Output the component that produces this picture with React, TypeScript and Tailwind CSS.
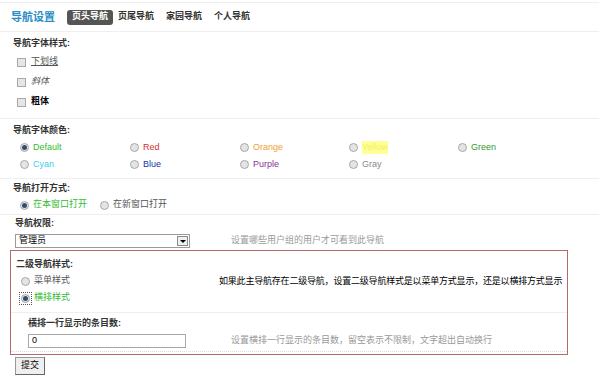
const FONT = "font-['Liberation_Sans','Noto_Sans_CJK_SC',sans-serif]";

const Radio = ({ checked = false, focus = false }: { checked?: boolean; focus?: boolean }) => (
  <span className={`flex items-center justify-center w-[11px] h-[11px] shrink-0 ${focus ? "outline outline-1 outline-dotted outline-[#555]" : ""}`}>
    <span className="flex items-center justify-center w-[9px] h-[9px] rounded-full border border-[#a8a8a8] bg-[#e4e4e4]">
      {checked && <span className="w-[5px] h-[5px] rounded-full bg-[#2f4f6f]" />}
    </span>
  </span>
);

const Checkbox = () => (
  <span className="w-[9px] h-[9px] shrink-0 border border-[#a8a8a8] bg-[#e6e6e6]" />
);

const Line = () => <div className="h-px bg-[#efefef]" />;

const colors = [
  { label: "Default", cls: "text-[#33bb33]", checked: true },
  { label: "Red", cls: "text-[#cc3333]" },
  { label: "Orange", cls: "text-[#eea035]" },
  { label: "Yellow", cls: "text-[#f2f25a] bg-[#ffff99]" },
  { label: "Green", cls: "text-[#339933]" },
  { label: "Cyan", cls: "text-[#44ccee]" },
  { label: "Blue", cls: "text-[#2233aa]" },
  { label: "Purple", cls: "text-[#883399]" },
  { label: "Gray", cls: "text-[#888888]" },
];

export default function App() {
  return (
    <div className={`w-[599px] h-[380px] bg-white text-[9px] text-[#333] overflow-hidden ${FONT}`}>
      <div className="h-[3px] border-b border-[#f0f0f0]" />

      {/* header */}
      <div className="h-[28px] flex items-center pl-[11px]">
        <span className="text-[11px] text-[#2b8ec6] font-bold mr-[12px]">导航设置</span>
        <span className="px-[5px] h-[15px] flex items-center rounded-[3px] bg-[#555] text-white font-bold text-[9px]">页头导航</span>
        <span className="ml-[5px] font-bold">页尾导航</span>
        <span className="ml-[12px] font-bold">家园导航</span>
        <span className="ml-[12px] font-bold">个人导航</span>
      </div>
      <Line />

      {/* font style */}
      <div className="pl-[13px]">
        <div className="h-[20px] flex items-end pb-[2px] font-bold">导航字体样式:</div>
        <div className="pl-[4px]">
          <div className="h-[20px] flex items-center gap-[5px]">
            <Checkbox />
            <span className="underline text-[#555]">下划线</span>
          </div>
          <div className="h-[20px] flex items-center gap-[5px]">
            <Checkbox />
            <span className="italic text-[#555]">斜体</span>
          </div>
          <div className="h-[20px] flex items-center gap-[5px]">
            <Checkbox />
            <span className="font-bold text-black">粗体</span>
          </div>
        </div>
      </div>
      <div className="h-[6px]" />
      <Line />

      {/* font color */}
      <div className="pl-[13px]">
        <div className="h-[19px] flex items-end pb-[1px] font-bold">导航字体颜色:</div>
        <div className="grid grid-cols-[110px_110px_109px_109px_109px] pl-[6px] pt-[1px]">
          {colors.map((c) => (
            <div key={c.label} className="h-[17px] flex items-center gap-[3px]">
              <Radio checked={c.checked} />
              <span className={c.cls}>{c.label}</span>
            </div>
          ))}
        </div>
      </div>
      <div className="h-[5px]" />
      <Line />

      {/* open mode */}
      <div className="pl-[13px]">
        <div className="h-[17px] flex items-end pb-[1px] font-bold">导航打开方式:</div>
        <div className="h-[18px] flex items-center pl-[6px] gap-[3px]">
          <Radio checked />
          <span className="text-[#33bb33] mr-[9px]">在本窗口打开</span>
          <Radio />
          <span className="text-[#555]">在新窗口打开</span>
        </div>
      </div>
      <Line />

      {/* permission */}
      <div className="pl-[15px]">
        <div className="h-[17px] flex items-center font-bold">导航权限:</div>
        <div className="h-[18px] flex items-center">
          <div className="w-[175px] h-[14px] border border-[#9a9a9a] flex items-center justify-between pl-[3px] pr-[1px] bg-white">
            <span className="text-black">管理员</span>
            <span className="w-[11px] h-[10px] border border-[#8a8a8a] bg-[#f0f0f0] flex items-center justify-center">
              <span className="w-0 h-0 border-l-[3px] border-r-[3px] border-t-[3px] border-l-transparent border-r-transparent border-t-black" />
            </span>
          </div>
          <span className="ml-[41px] text-[#999]">设置哪些用户组的用户才可看到此导航</span>
        </div>
      </div>

      {/* sub nav style */}
      <div className="ml-[10px] w-[558px] h-[105px] border border-[#b56a6a]">
        <div className="pl-[5px]">
          <div className="h-[22px] flex items-end pb-[2px] font-bold">二级导航样式:</div>
          <div className="flex">
            <div className="w-[203px] shrink-0 pl-[4px]">
              <div className="h-[16px] flex items-center gap-[3px]">
                <Radio />
                <span className="text-[#555]">菜单样式</span>
              </div>
              <div className="h-[18px] flex items-center gap-[3px]">
                <Radio checked focus />
                <span className="text-[#33bb33]">横排样式</span>
              </div>
            </div>
            <div className="h-[18px] flex items-center text-black whitespace-nowrap tracking-[-0.2px]">
              如果此主导航存在二级导航，设置二级导航样式是以菜单方式显示，还是以横排方式显示
            </div>
          </div>
        </div>
        <div className="h-[5px]" />
        <div className="h-px bg-[#efefef]" />
        <div className="pl-[17px]">
          <div className="h-[18px] flex items-end pb-[1px] font-bold">横排一行显示的条目数:</div>
          <div className="h-[20px] flex items-center">
            <div className="w-[158px] h-[14px] border border-[#a8a8a8] flex items-center pl-[3px] text-black">0</div>
            <span className="ml-[45px] text-[#999]">设置横排一行显示的条目数，留空表示不限制，文字超出自动换行</span>
          </div>
        </div>
        <div className="h-px border-b border-dotted border-[#ddd]" />
      </div>

      {/* submit */}
      <div className="pl-[15px] pt-[2px]">
        <button className="w-[30px] h-[18px] border border-[#999] border-r-[#666] border-b-[#666] bg-[#efefef] text-[9px] text-black flex items-center justify-center">
          提交
        </button>
      </div>
    </div>
  );
}
